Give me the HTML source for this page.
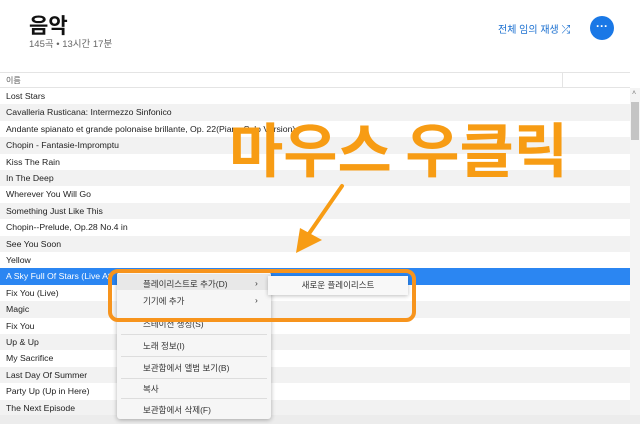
<!DOCTYPE html>
<html><head><meta charset="utf-8"><style>
*{margin:0;padding:0;box-sizing:border-box}
body{width:640px;height:424px;overflow:hidden;background:#fff;font-family:"Liberation Sans","Noto Sans CJK KR",sans-serif;position:relative}
.t{position:absolute;left:29px;top:10px;font-size:21px;font-weight:bold;color:#111}
.s{position:absolute;left:29px;top:36px;font-size:9.5px;color:#666}
.sh{position:absolute;left:498px;top:21px;font-size:10px;color:#1a6fd0}
.dot{position:absolute;left:590px;top:16px;width:24px;height:24px;border-radius:50%;background:#1a78e6;color:#fff;font-size:12px;text-align:center;line-height:20px;font-weight:bold}
.hdr{position:absolute;left:0;top:72px;width:630px;height:16px;border-top:1px solid #e4e4e4;border-bottom:1px solid #e4e4e4;font-size:8px;color:#555;padding-left:6px;line-height:15px}
.hdr i{position:absolute;left:562px;top:0;height:15px;border-left:1px solid #e4e4e4}
.r{position:absolute;left:0;width:630px;height:16.4px;font-size:8.7px;color:#222;padding-left:6px;line-height:16px;white-space:nowrap;overflow:hidden}
.g{background:#f2f2f2}.sel{background:#2b86f2;color:#fff}
.sb{position:absolute;left:630px;top:88px;width:10px;height:327px;background:#f4f4f4}
.th{position:absolute;left:631px;top:102px;width:8px;height:38px;background:#c4c4c4}
.bot{position:absolute;left:0;top:415px;width:640px;height:9px;background:#ececec}
.big{position:absolute;left:229px;top:117px;font-size:59px;font-weight:bold;color:#f79c14;letter-spacing:0;font-family:"Noto Sans CJK KR",sans-serif;line-height:1}
.menu{position:absolute;left:117px;top:272px;width:154px;height:147px;background:#f6f6f6;box-shadow:0 1px 5px rgba(0,0,0,.3);border-radius:3px;font-size:8.5px;color:#333}
.mi{position:absolute;left:26px}
.sep{position:absolute;left:4px;width:146px;border-top:1px solid #ddd}
.sub{position:absolute;left:268px;top:276px;width:140px;height:19px;background:#f8f8f8;box-shadow:0 1px 4px rgba(0,0,0,.25);font-size:8.5px;color:#333;text-align:center;line-height:19px}
.box{position:absolute;left:108px;top:269px;width:308px;height:53px;border:4px solid #f7941d;border-radius:10px}
</style></head><body>
<div class="t">음악</div>
<div class="s">145곡 • 13시간 17분</div>
<div class="sh">전체 임의 재생 <span style="font-size:11px">⤮</span></div>
<div class="dot">···</div>
<div class="hdr">이름<i></i></div>
<div class="r" style="top:88px">Lost Stars</div>
<div class="r g" style="top:104.4px">Cavalleria Rusticana: Intermezzo Sinfonico</div>
<div class="r" style="top:120.8px">Andante spianato et grande polonaise brillante, Op. 22(Piano Solo Version)</div>
<div class="r g" style="top:137.2px">Chopin - Fantasie-Impromptu</div>
<div class="r" style="top:153.6px">Kiss The Rain</div>
<div class="r g" style="top:170px">In The Deep</div>
<div class="r" style="top:186.4px">Wherever You Will Go</div>
<div class="r g" style="top:202.8px">Something Just Like This</div>
<div class="r" style="top:219.2px">Chopin--Prelude, Op.28 No.4 in</div>
<div class="r g" style="top:235.6px">See You Soon</div>
<div class="r" style="top:252px">Yellow</div>
<div class="r sel" style="top:268.4px">A Sky Full Of Stars (Live At</div>
<div class="r" style="top:284.8px">Fix You (Live)</div>
<div class="r g" style="top:301.2px">Magic</div>
<div class="r" style="top:317.6px">Fix You</div>
<div class="r g" style="top:334px">Up &amp; Up</div>
<div class="r" style="top:350.4px">My Sacrifice</div>
<div class="r g" style="top:366.8px">Last Day Of Summer</div>
<div class="r" style="top:383.2px">Party Up (Up in Here)</div>
<div class="r g" style="top:399.6px">The Next Episode</div>
<div class="sb"></div><div class="th"></div>
<div style="position:absolute;left:632px;top:90px;font-size:7px;color:#777">˄</div>
<div class="bot"></div>
<div class="big">마우스 우클릭</div>
<svg style="position:absolute;left:0;top:0" width="640" height="424"><line x1="342" y1="186" x2="306" y2="238" stroke="#f79c14" stroke-width="4" stroke-linecap="round"/><polygon points="296,253 300,228 322,240" fill="#f79c14"/></svg>
<div class="menu">
<div style="position:absolute;left:0;top:2px;width:154px;height:16px;background:#e8e8e8"></div>
<div class="mi" style="top:6px">플레이리스트로 추가(D)</div><div style="position:absolute;left:138px;top:6px">›</div>
<div class="mi" style="top:23px">기기에 추가</div><div style="position:absolute;left:138px;top:23px">›</div>
<div class="mi" style="top:46px">스테이션 생성(S)</div>
<div class="sep" style="top:62px"></div>
<div class="mi" style="top:68px">노래 정보(I)</div>
<div class="sep" style="top:84px"></div>
<div class="mi" style="top:90px">보관함에서 앨범 보기(B)</div>
<div class="sep" style="top:106px"></div>
<div class="mi" style="top:111px">복사</div>
<div class="sep" style="top:126px"></div>
<div class="mi" style="top:132px">보관함에서 삭제(F)</div>
</div>
<div class="sub">새로운 플레이리스트</div>
<div class="box"></div>
</body></html>
